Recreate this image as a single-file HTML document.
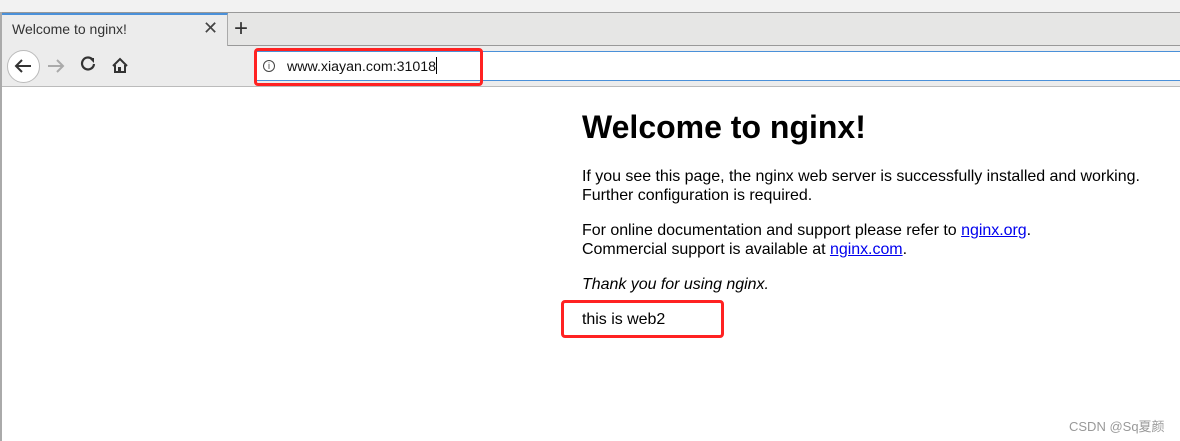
<!DOCTYPE html>
<html><head><style>
*{margin:0;padding:0;box-sizing:border-box}
body{width:1180px;height:441px;overflow:hidden;background:#fff;font-family:"Liberation Sans",Arial,sans-serif;position:relative}
.abs{position:absolute}
.t{position:absolute;left:582px;font-size:16px;letter-spacing:-0.03px;line-height:19px;color:#000;white-space:nowrap}
a{color:#00e;text-decoration:underline}
</style></head><body>
<div class="abs" style="left:0;top:0;width:1180px;height:12px;background:#f2f2f2"></div>
<div class="abs" style="left:0;top:12px;width:1180px;height:34px;background:#e6e6e5;border-top:1px solid #999;border-bottom:1px solid #999"></div>
<div class="abs" style="left:2px;top:13px;width:226px;height:34px;background:#ececec;border-top:2px solid #4a90d9;border-right:1px solid #aaa"></div>
<div class="abs" style="left:12px;top:21px;font-size:14px;color:#333">Welcome to nginx!</div>
<div class="abs" style="left:203px;top:18px;font-size:18px;color:#444">✕</div>
<div class="abs" style="left:234px;top:15px;font-size:24px;color:#333">+</div>
<div class="abs" style="left:0;top:46px;width:1180px;height:41px;background:#ececec;border-bottom:1px solid #bbb"></div>
<div class="abs" style="left:0;top:12px;width:2px;height:429px;background:#aaa"></div>
<div class="abs" style="left:7px;top:50px;width:33px;height:33px;border-radius:50%;background:#fff;border:1px solid #bbb"></div>
<svg class="abs" style="left:0;top:46px" width="140" height="40">
<path d="M31 20H16M22 14l-6 6 6 6" stroke="#333" stroke-width="2" fill="none"/>
<path d="M48 20h15M57 14l6 6-6 6" stroke="#aaa" stroke-width="2" fill="none"/>
<path d="M94 18a6 6 0 1 1-2-5" stroke="#333" stroke-width="2.2" fill="none"/><path d="M89 12h5v5z" fill="#333"/>
<path d="M113 20l7-7 7 7M115 19v7h10v-7" stroke="#333" stroke-width="2" fill="none"/><rect x="118" y="21" width="3" height="5" fill="#333"/>
</svg>
<div class="abs" style="left:256px;top:51px;width:924px;height:30px;background:#fff;border-top:1px solid #4a90d9;border-bottom:1px solid #4a90d9"></div>
<div class="abs" style="left:263px;top:60px;width:12px;height:12px;border-radius:50%;border:1px solid #444;font-size:9px;line-height:10px;text-align:center;color:#444">i</div>
<div class="abs" style="left:287px;top:57px;font-size:14.2px;color:#111">www.xiayan.com:31018<span style="display:inline-block;width:1px;height:17px;background:#000;vertical-align:-3px"></span></div>
<div class="abs" style="left:254px;top:48px;width:229px;height:38px;border:3px solid #f22;border-radius:4px"></div>
<div class="abs" style="left:582px;top:107px;font-size:32px;font-weight:bold;line-height:40px">Welcome to nginx!</div>
<div class="t" style="top:167px">If you see this page, the nginx web server is successfully installed and working.<br>Further configuration is required.</div>
<div class="t" style="top:221px">For online documentation and support please refer to <a>nginx.org</a>.<br>Commercial support is available at <a>nginx.com</a>.</div>
<div class="t" style="top:275px;font-style:italic">Thank you for using nginx.</div>
<div class="t" style="top:310px">this is web2</div>
<div class="abs" style="left:561px;top:300px;width:163px;height:38px;border:3px solid #f22;border-radius:4px"></div>
<div class="abs" style="left:1069px;top:416px;font-size:13px;color:#999;font-family:'Liberation Sans','Noto Sans CJK SC',sans-serif">CSDN @Sq夏颜</div>
</body></html>
